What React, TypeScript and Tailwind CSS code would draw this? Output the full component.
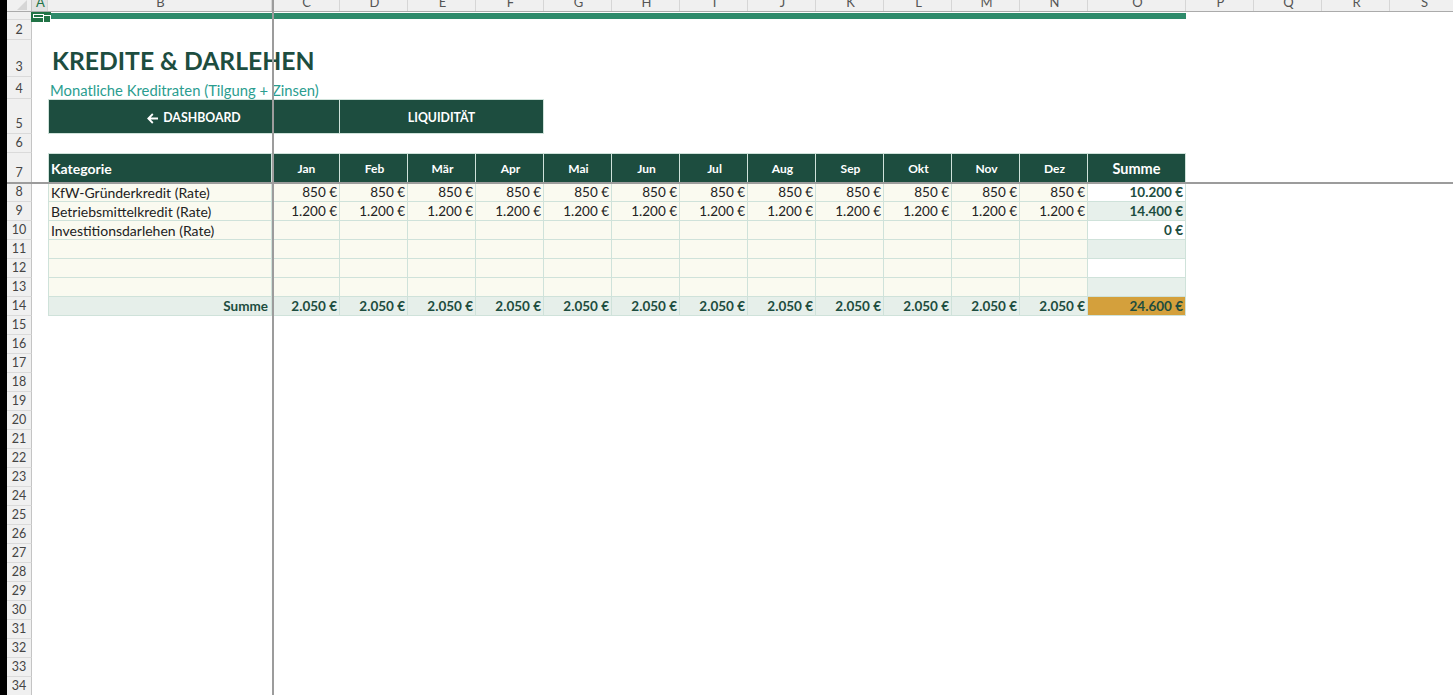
import clsx from "clsx";

const MONTHS = ["Jan", "Feb", "Mär", "Apr", "Mai", "Jun", "Jul", "Aug", "Sep", "Okt", "Nov", "Dez"];

const COLS = [
  { l: "A", w: "w-[16px]" },
  { l: "B", w: "w-[224px]" },
  ...["C", "D", "E", "F", "G", "H", "I", "J", "K", "L", "M", "N"].map((l) => ({ l, w: "w-[68px]" })),
  { l: "O", w: "w-[98px]" },
  { l: "P", w: "w-[68px]" },
  { l: "Q", w: "w-[68px]" },
  { l: "R", w: "w-[68px]" },
  { l: "S", w: "w-[68px]" },
];

const LINES = [
  { name: "KfW-Gründerkredit (Rate)", value: "850 €", total: "10.200 €" },
  { name: "Betriebsmittelkredit (Rate)", value: "1.200 €", total: "14.400 €" },
  { name: "Investitionsdarlehen (Rate)", value: "", total: "0 €" },
  { name: "", value: "", total: "" },
  { name: "", value: "", total: "" },
  { name: "", value: "", total: "" },
];

const EMPTY_ROWS = Array.from({ length: 21 }, (_, i) => i + 15);

function RowHead({ n, className }: { n?: number; className?: string }) {
  return (
    <div
      className={clsx(
        "flex w-[25px] shrink-0 items-end justify-center overflow-hidden border-r border-b border-r-[#c4c4c4] border-b-[#dadada] bg-[#f0f0f0] pb-[2px] text-[12.5px] leading-[14px] text-[#444]",
        className
      )}
    >
      {n}
    </div>
  );
}

function ColLetters() {
  return (
    <div className="flex h-[12px] shrink-0 border-b border-[#ababab] bg-[#f0f0f0]">
      <div className="flex w-[25px] shrink-0 items-start justify-end border-r border-[#c4c4c4] bg-[#f0f0f0] pr-[4px]">
        <svg width="11" height="10" viewBox="0 0 11 10">
          <path d="M11 0 L11 10 L1 10 Z" fill="#d6d6d6" />
        </svg>
      </div>
      {COLS.map((c) => (
        <div
          key={c.l}
          className={clsx(
            "flex shrink-0 items-end justify-center border-r border-[#d6d6d6] pb-[2px] pl-[2px] text-[13px] leading-none",
            c.w,
            c.l === "A" ? "bg-[#e2e2e2] text-[#217346]" : "text-[#555]"
          )}
        >
          {c.l}
        </div>
      ))}
    </div>
  );
}

export default function App() {
  return (
    <div className="relative flex h-[695px] w-[1453px] overflow-hidden bg-white font-['Lato','Open_Sans',sans-serif]">
      <div className="w-[7px] shrink-0 bg-black" />

      <div className="flex min-w-0 flex-1 flex-col">
        <ColLetters />

        {/* row 1: accent bar */}
        <div className="flex h-[8px] shrink-0">
          <RowHead className="items-start pb-0 text-[#217346]" />
          <div className="flex w-[1154px] shrink-0 items-center">
            <div className="h-[6px] w-full bg-[#2e8b6b]" />
          </div>
        </div>

        {/* row 2 */}
        <div className="flex h-[20px] shrink-0">
          <RowHead n={2} />
        </div>

        {/* row 3: title */}
        <div className="flex h-[37px] shrink-0">
          <RowHead n={3} />
          <div className="w-[16px] shrink-0" />
          <div className="flex items-end whitespace-nowrap pb-[2px] pl-[4px] text-[24.7px] font-bold leading-[28px] text-[#1d4d3f]">
            KREDITE &amp; DARLEHEN
          </div>
        </div>

        {/* row 4: subtitle */}
        <div className="flex h-[22px] shrink-0">
          <RowHead n={4} />
          <div className="w-[16px] shrink-0" />
          <div className="flex items-end whitespace-nowrap pl-[2px] text-[14.8px] leading-[18px] text-[#2a9d8f]">
            Monatliche Kreditraten (Tilgung + Zinsen)
          </div>
        </div>

        {/* row 5: nav buttons */}
        <div className="flex h-[35px] shrink-0">
          <RowHead n={5} />
          <div className="w-[16px] shrink-0" />
          <div className="flex w-[292px] shrink-0 items-center justify-center gap-[4px] border border-[#cfe2da] bg-[#1d4d3f] pt-[3px] text-[12.3px] font-bold text-white">
            <svg width="12" height="11" viewBox="0 0 12 11" fill="none" stroke="white" strokeWidth="1.8">
              <path d="M11 5.5 H1.5 M5.8 1 L1.3 5.5 L5.8 10" />
            </svg>
            DASHBOARD
          </div>
          <div className="flex w-[204px] shrink-0 items-center justify-center border border-l-0 border-[#cfe2da] bg-[#1d4d3f] pt-[3px] text-[12.3px] font-bold text-white">
            LIQUIDITÄT
          </div>
        </div>

        {/* row 6 */}
        <div className="flex h-[19px] shrink-0">
          <RowHead n={6} />
        </div>

        {/* row 7: table header */}
        <div className="flex h-[30px] shrink-0">
          <RowHead n={7} />
          <div className="w-[16px] shrink-0" />
          <div className="flex w-[224px] shrink-0 items-center border border-[#cfe2da] bg-[#1d4d3f] pl-[2px] text-[14px] font-bold text-white">
            Kategorie
          </div>
          {MONTHS.map((m) => (
            <div
              key={m}
              className="flex w-[68px] shrink-0 items-center justify-center border-t border-r border-[#cfe2da] bg-[#1d4d3f] pl-[2px] text-[12px] font-bold text-white"
            >
              {m}
            </div>
          ))}
          <div className="flex w-[98px] shrink-0 items-center justify-center border-t border-r border-[#cfe2da] bg-[#1d4d3f] text-[14.5px] font-bold text-white">
            Summe
          </div>
        </div>

        {/* rows 8-13: credit lines */}
        {LINES.map((line, i) => (
          <div key={i} className="flex h-[19px] shrink-0">
            <RowHead n={i + 8} />
            <div className="w-[16px] shrink-0" />
            <div className="flex w-[224px] shrink-0 items-center border-l border-r border-b border-[#cfe2da] bg-[#fafaf0] pl-[2px] text-[14px] text-[#222]">
              {line.name}
            </div>
            {MONTHS.map((m) => (
              <div
                key={m}
                className="flex w-[68px] shrink-0 items-center justify-end border-r border-b border-[#cfe2da] bg-[#fafaf0] pr-[2px] text-[13.5px] text-[#222]"
              >
                {line.value}
              </div>
            ))}
            <div
              className={clsx(
                "flex w-[98px] shrink-0 items-center justify-end border-r border-b border-[#cfe2da] pr-[2px] text-[13.5px] font-bold text-[#1d4d3f]",
                i % 2 === 0 ? "bg-white" : "bg-[#e7f0eb]"
              )}
            >
              {line.total}
            </div>
          </div>
        ))}

        {/* row 14: totals */}
        <div className="flex h-[19px] shrink-0">
          <RowHead n={14} />
          <div className="w-[16px] shrink-0" />
          <div className="flex w-[224px] shrink-0 items-center justify-end border-l border-r border-b border-[#cfe2da] bg-[#e6efea] pr-[3px] text-[13.5px] font-bold text-[#1d4d3f]">
            Summe
          </div>
          {MONTHS.map((m) => (
            <div
              key={m}
              className="flex w-[68px] shrink-0 items-center justify-end border-r border-b border-[#cfe2da] bg-[#e6efea] pr-[2px] text-[13.5px] font-bold text-[#1d4d3f]"
            >
              2.050 €
            </div>
          ))}
          <div className="flex w-[98px] shrink-0 items-center justify-end border-r border-b border-[#cfe2da] bg-[#d4a03c] pr-[2px] text-[13.5px] font-bold text-[#1d4d3f]">
            24.600 €
          </div>
        </div>

        {EMPTY_ROWS.map((n) => (
          <div key={n} className="flex h-[19px] shrink-0">
            <RowHead n={n} />
          </div>
        ))}
      </div>

      {/* selected cell A1 */}
      <div className="absolute top-[12px] left-[31px] h-[10px] w-[20px] bg-[#217346]">
        <div className="absolute top-[2px] left-[2px] h-[4px] w-[11px] border border-white" />
        <div className="absolute top-[3px] left-[12px] h-[8px] w-[8px] border border-white bg-[#217346]" />
      </div>

      {/* frozen pane lines */}
      <div className="absolute top-0 left-[272px] h-full w-[2px] bg-[#9c9c9c]" />
      <div className="absolute top-[182px] right-0 left-[7px] h-[2px] bg-[#9c9c9c]" />
    </div>
  );
}
